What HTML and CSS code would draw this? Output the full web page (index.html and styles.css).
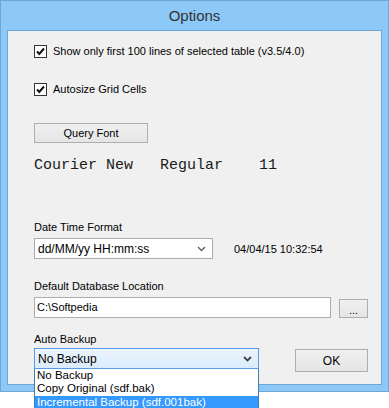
FILE: index.html
```html
<!DOCTYPE html>
<html lang="en">
<head>
  <meta charset="UTF-8" />
  <title>Options</title>
  <link rel="stylesheet" href="styles.css">
</head>
<body>
  <div class="window">
    <div class="titlebar">Options</div>

    <div class="client">
      <label class="check first">
        <span class="box">
          <svg width="11" height="11" viewBox="0 0 11 11"><path d="M2 5.5 L4.3 8 L9 2.5" fill="none" stroke="#111" stroke-width="2"/></svg>
        </span>
        Show only first 100 lines of selected table (v3.5/4.0)
      </label>
      <label class="check second">
        <span class="box">
          <svg width="11" height="11" viewBox="0 0 11 11"><path d="M2 5.5 L4.3 8 L9 2.5" fill="none" stroke="#111" stroke-width="2"/></svg>
        </span>
        Autosize Grid Cells
      </label>

      <button class="btn query">Query Font</button>
      <div class="fontinfo">Courier New   Regular    11</div>

      <div class="label dtf">Date Time Format</div>
      <div class="row">
        <div class="select dt">
          <span>dd/MM/yy HH:mm:ss</span>
          <svg class="arrow" width="9" height="6" viewBox="0 0 9 6"><path d="M1 1 L4.5 4.5 L8 1" fill="none" stroke="#666" stroke-width="1.5"/></svg>
        </div>
        <span class="now">04/04/15 10:32:54</span>
      </div>

      <div class="label ddl">Default Database Location</div>
      <div class="row">
        <div class="input">C:\Softpedia</div>
        <button class="btn browse">...</button>
      </div>

      <div class="label ab">Auto Backup</div>
      <div class="row bottom">
        <div class="combo">
          <div class="select focused">
            <span>No Backup</span>
            <svg class="arrow" width="9" height="6" viewBox="0 0 9 6"><path d="M1 1 L4.5 4.5 L8 1" fill="none" stroke="#444" stroke-width="1.8"/></svg>
          </div>
          <ul class="droplist">
            <li>No Backup</li>
            <li>Copy Original (sdf.bak)</li>
            <li class="selected">Incremental Backup (sdf.001bak)</li>
          </ul>
        </div>
        <button class="btn ok">OK</button>
      </div>
    </div>
  </div>
</body>
</html>
```

FILE: styles.css
```css
body {
  margin: 0;
  min-height: 408px;
  background: #fff;
  font-family: "Liberation Sans", Arial, sans-serif;
  font-size: 11px;
  color: #000;
}

.window {
  width: 389px;
  height: 392px;
  box-sizing: border-box;
  background: #8cc8f8;
  border: 1px solid #6fa6d8;
  padding: 0 6px 7px 6px;
}

.titlebar {
  height: 29px;
  line-height: 30px;
  text-align: center;
  font-size: 15px;
  color: #333;
}

.client {
  height: 355px;
  box-sizing: border-box;
  background: #f0f0f0;
  border: 1px solid #6fa6d8;
  padding-left: 26px;
  display: flex;
  flex-direction: column;
  align-items: flex-start;
}

.check {
  display: flex;
  align-items: center;
  gap: 6px;
  height: 13px;
  line-height: 13px;
}

.check.first { margin-top: 14px; }
.check.second { margin-top: 25px; }

.box {
  width: 11px;
  height: 11px;
  border: 1px solid #333;
  background: #fff;
  display: flex;
}

.btn {
  font-family: "Liberation Sans", Arial, sans-serif;
  font-size: 11px;
  color: #000;
  border: 1px solid #adadad;
  background: linear-gradient(#f0f0f0, #e5e5e5);
  padding: 0;
  box-sizing: border-box;
}

.query {
  margin-top: 27px;
  width: 114px;
  height: 20px;
}

.fontinfo {
  margin-top: 14px;
  height: 18px;
  line-height: 18px;
  font-family: "Liberation Mono", "Courier New", monospace;
  font-size: 15px;
  white-space: pre;
  color: #1a1a1a;
}

.label {
  height: 15px;
  line-height: 15px;
}

.label.dtf { margin-top: 45px; }
.label.ddl { margin-top: 20px; }
.label.ab { margin-top: 14px; }

.row {
  display: flex;
  align-items: center;
  margin-top: 3px;
}

.select {
  height: 21px;
  box-sizing: border-box;
  border: 1px solid #acacac;
  background: #fff;
  display: flex;
  align-items: center;
  justify-content: space-between;
  padding: 0 6px 0 3px;
  font-size: 12px;
}

.select.dt { width: 179px; }

.now {
  margin-left: 21px;
}

.input {
  width: 297px;
  height: 21px;
  box-sizing: border-box;
  border: 1px solid #acacac;
  background: #fff;
  line-height: 19px;
  padding-left: 2px;
}

.browse {
  margin-left: 8px;
  margin-top: 2px;
  width: 29px;
  height: 19px;
  line-height: 20px;
}

.row.bottom {
  margin-top: 1px;
  align-items: flex-start;
}

.combo {
  position: relative;
  width: 225px;
}

.select.focused {
  border-color: #569de5;
  background: linear-gradient(#ecf4fc, #dcecfc);
}

.droplist {
  position: absolute;
  left: 0;
  top: 21px;
  width: 225px;
  box-sizing: border-box;
  margin: 0;
  padding: 0;
  list-style: none;
  background: #fff;
  border: 1px solid #3c7fb1;
  border-top: none;
  font-size: 11.5px;
  z-index: 2;
}

.droplist li {
  height: 13.3px;
  line-height: 13px;
  padding-left: 2px;
  overflow: hidden;
}

.droplist li.selected {
  background: #3399ff;
  color: #fff;
}

.ok {
  margin-left: 36px;
  margin-top: 1px;
  width: 73px;
  height: 23px;
  font-size: 12px;
}
```
